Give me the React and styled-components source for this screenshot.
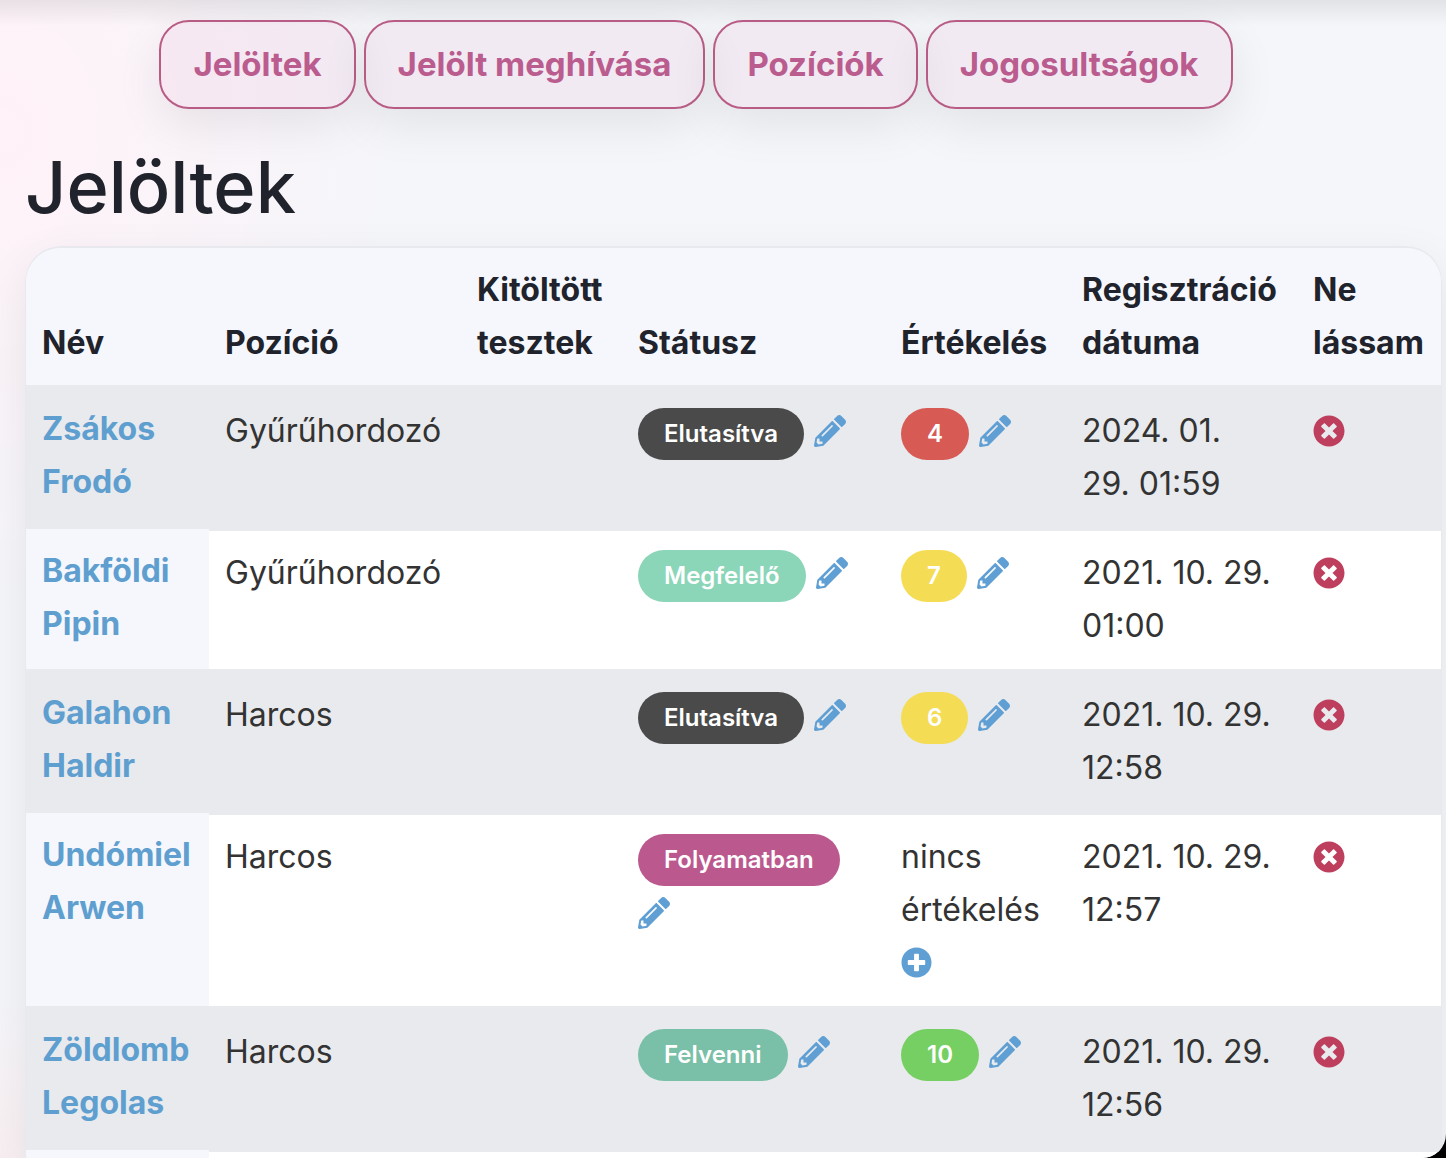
import styled, { createGlobalStyle } from "styled-components";
import { FaPencilAlt, FaPlusCircle, FaTimesCircle } from "react-icons/fa";

const MENU = ["Jelöltek", "Jelölt meghívása", "Pozíciók", "Jogosultságok"];

const COLUMNS = [
  { label: "Név", width: 183 },
  { label: "Pozíció", width: 252 },
  { label: "Kitöltött tesztek", width: 161 },
  { label: "Státusz", width: 263 },
  { label: "Értékelés", width: 181 },
  { label: "Regisztráció dátuma", width: 231 },
  { label: "Ne lássam", width: 144 },
];

const STATUS_COLORS = {
  Elutasítva: "#4a4a4a",
  Megfelelő: "#8bd5b8",
  Folyamatban: "#bb598f",
  Felvenni: "#7abfa7",
};

const CANDIDATES = [
  {
    name: "Zsákos Frodó",
    position: "Gyűrűhordozó",
    status: "Elutasítva",
    rating: 4,
    date: "2024. 01. 29. 01:59",
  },
  {
    name: "Bakföldi Pipin",
    position: "Gyűrűhordozó",
    status: "Megfelelő",
    rating: 7,
    date: "2021. 10. 29. 01:00",
  },
  {
    name: "Galahon Haldir",
    position: "Harcos",
    status: "Elutasítva",
    rating: 6,
    date: "2021. 10. 29. 12:58",
  },
  {
    name: "Undómiel Arwen",
    position: "Harcos",
    status: "Folyamatban",
    rating: null,
    date: "2021. 10. 29. 12:57",
  },
  {
    name: "Zöldlomb Legolas",
    position: "Harcos",
    status: "Felvenni",
    rating: 10,
    date: "2021. 10. 29. 12:56",
  },
];

const ratingColor = (rating) => {
  if (rating < 5) return "#d75a54";
  if (rating < 8) return "#f4dc55";
  return "#76cf62";
};

const Rating = ({ value }) => {
  if (value === null) {
    return (
      <>
        nincs értékelés{" "}
        <IconButton aria-label="Értékelés hozzáadása">
          <FaPlusCircle size={31} />
        </IconButton>
      </>
    );
  }

  return (
    <TagGroup>
      <Tag $color={ratingColor(value)}>{value}</Tag>
      <IconButton aria-label="Értékelés szerkesztése">
        <FaPencilAlt size={32} />
      </IconButton>
    </TagGroup>
  );
};

const CandidateRow = ({ candidate }) => (
  <Row>
    <NameCell scope="row">
      <NameLink href="#">{candidate.name}</NameLink>
    </NameCell>
    <Cell>{candidate.position}</Cell>
    <Cell />
    <Cell>
      <TagGroup>
        <Tag $color={STATUS_COLORS[candidate.status]}>{candidate.status}</Tag>
        <IconButton aria-label="Státusz szerkesztése">
          <FaPencilAlt size={32} />
        </IconButton>
      </TagGroup>
    </Cell>
    <Cell>
      <Rating value={candidate.rating} />
    </Cell>
    <DateCell>{candidate.date}</DateCell>
    <Cell>
      <IconButton $danger aria-label="Ne lássam">
        <FaTimesCircle size={32} />
      </IconButton>
    </Cell>
  </Row>
);

const App = () => (
  <>
    <GlobalStyle />
    <Page>
      <Menu>
        {MENU.map((item) => (
          <MenuLink key={item} href="#">
            {item}
          </MenuLink>
        ))}
      </Menu>

      <Title>Jelöltek</Title>

      <TableCard>
        <Table>
          <colgroup>
            {COLUMNS.map((column) => (
              <Column key={column.label} $width={column.width} />
            ))}
          </colgroup>
          <thead>
            <tr>
              {COLUMNS.map((column) => (
                <HeadCell key={column.label} scope="col">
                  {column.label}
                </HeadCell>
              ))}
            </tr>
          </thead>
          <tbody>
            {CANDIDATES.map((candidate) => (
              <CandidateRow key={candidate.name} candidate={candidate} />
            ))}
            <Row>
              <NameCell />
              {COLUMNS.slice(1).map((column) => (
                <Cell key={column.label} />
              ))}
            </Row>
          </tbody>
        </Table>
      </TableCard>
    </Page>
  </>
);

// Styles
const GlobalStyle = createGlobalStyle`
  * {
    box-sizing: border-box;
  }

  body {
    margin: 0;
    background: #000;
    color: #333;
    font-family: Inter, "Liberation Sans", sans-serif;
    font-size: 32px;
    font-optical-sizing: none;
    line-height: 53px;
  }
`;

const Page = styled.main`
  height: 100vh;
  padding: 20px 4px 0 25px;
  overflow-y: auto;
  scrollbar-width: none;
  border-bottom-right-radius: 24px;
  background:
    linear-gradient(to bottom, rgba(0, 0, 0, 0.08), rgba(0, 0, 0, 0) 26px),
    radial-gradient(
      ellipse 400px 480px at 0 130px,
      #fff2f8,
      rgba(255, 242, 248, 0)
    ),
    radial-gradient(
      ellipse 100px 160px at 0 1158px,
      #f9eff2,
      rgba(249, 239, 242, 0)
    ),
    #f5f6fa;
`;

const Menu = styled.nav`
  display: flex;
  justify-content: center;
  gap: 8px;
  padding-right: 75px;
`;

const MenuLink = styled.a`
  padding: 16px 32px;
  border: 2px solid #b85c86;
  border-radius: 30px;
  background: rgba(205, 80, 150, 0.07);
  box-shadow: 0 16px 48px rgba(0, 0, 0, 0.08);
  color: #bb5c8f;
  font-size: 33px;
  font-weight: 700;
  text-decoration: none;
  white-space: nowrap;
`;

const Title = styled.h1`
  margin: 34px 0 15px;
  color: #20232c;
  font-size: 72px;
  font-weight: 500;
  line-height: 88px;
`;

const TableCard = styled.div`
  overflow: clip;
  border: 1px solid #e7e9ee;
  border-top-width: 2px;
  border-radius: 36px;
  box-shadow: 0 16px 48px rgba(0, 0, 0, 0.08);
`;

const Table = styled.table`
  width: 100%;
  table-layout: fixed;
  border-collapse: separate;
  border-spacing: 0;
`;

const Column = styled.col`
  width: ${(props) => props.$width}px;
`;

const HeadCell = styled.th`
  padding: 15px 16px 16px;
  border-bottom: 2px solid #e8eaed;
  background: #f5f7fc;
  color: #20232c;
  font-weight: 700;
  text-align: left;
  vertical-align: bottom;
`;

const NameCell = styled.th`
  padding: 15px 14px 17px 16px;
  border-bottom: 2px solid #e8eaed;
  background: #f5f7fc;
  font-weight: 700;
  text-align: left;
  vertical-align: top;
`;

const Cell = styled.td`
  padding: 15px 16px 17px;
  border: solid #e8eaed;
  border-width: 2px 0;
  background: #fff;
  vertical-align: top;
`;

const DateCell = styled(Cell)`
  padding-right: 22px;
`;

const Row = styled.tr`
  &:nth-child(odd) > * {
    background: #e8eaed;
  }
`;

const NameLink = styled.a`
  color: #5f9fd0;
  text-decoration: none;
`;

const TagGroup = styled.div`
  display: flex;
  flex-wrap: wrap;
  align-items: flex-start;
  column-gap: 10px;
`;

const Tag = styled.span`
  margin-top: 4px;
  padding: 0 26px;
  border-radius: 26px;
  background: ${(props) => props.$color};
  color: #fff;
  font-size: 24px;
  font-weight: 600;
  line-height: 52px;
`;

const IconButton = styled.button`
  display: inline-flex;
  align-items: center;
  height: 53px;
  padding: 0;
  border: 0;
  background: none;
  color: ${(props) => (props.$danger ? "#be3f5d" : "#5f9fd3")};
  vertical-align: top;
  cursor: pointer;
`;

export default App;
